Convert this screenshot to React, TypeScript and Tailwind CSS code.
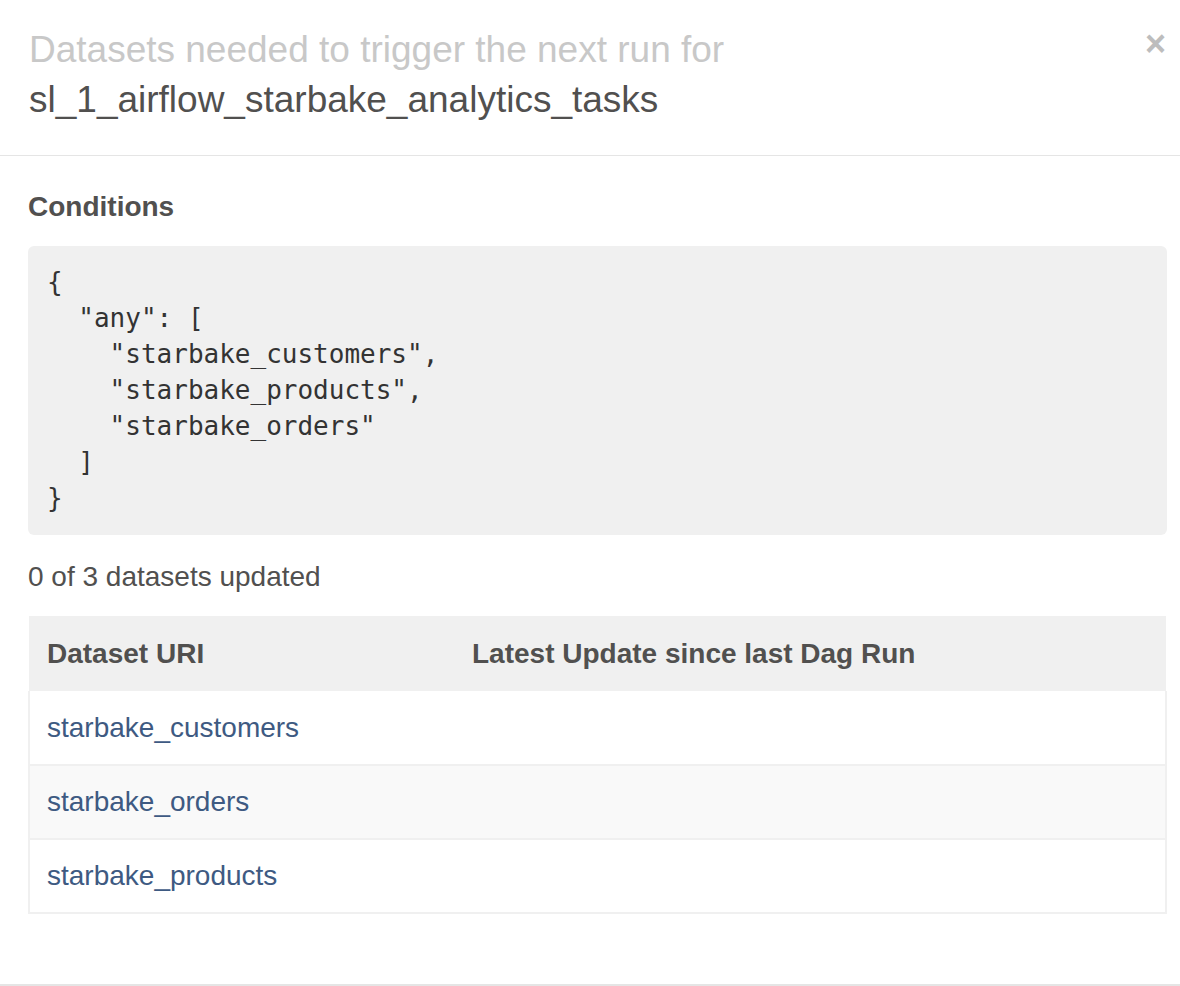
import React from "react";

const code = `{
  "any": [
    "starbake_customers",
    "starbake_products",
    "starbake_orders"
  ]
}`;

const rows = ["starbake_customers", "starbake_orders", "starbake_products"];

export default function App() {
  return (
    <div
      className="w-[1180px] h-[986px] bg-white text-[#51504f] overflow-hidden flex flex-col"
      style={{ fontFamily: '"Liberation Sans", Arial, sans-serif' }}
    >
      <div className="relative px-[29px] pt-[25px] pb-[30px] border-b border-[#e5e5e5]">
        <button className="absolute right-[14px] top-[26px] text-[36px] font-bold leading-none text-[#bdbdbd]">
          ×
        </button>
        <h4 className="text-[37px] leading-[50px] m-0">
          <span className="text-[#c8c8c8]">Datasets needed to trigger the next run for</span>
          <br />
          <span>sl_1_airflow_starbake_analytics_tasks</span>
        </h4>
      </div>
      <div className="pl-[28px] pr-[13px] pt-[34px] flex-1">
        <div className="text-[28px] font-bold leading-[34px]">Conditions</div>
        <pre
          className="mt-[22px] bg-[#f0f0f0] rounded-[6px] px-[19px] pt-[18px] pb-[19px] text-[26px] leading-[36px] text-[#333]"
          style={{ fontFamily: '"DejaVu Sans Mono", monospace' }}
        >
          {code}
        </pre>
        <div className="mt-[25px] text-[28px] leading-[34px]">0 of 3 datasets updated</div>
        <table className="mt-[22px] w-full border-collapse">
          <thead>
            <tr className="bg-[#f0f0f0]">
              <th className="text-left font-bold text-[28px] leading-[34px] h-[75px] px-[18px] w-[443px]">Dataset URI</th>
              <th className="text-left font-bold text-[28px] leading-[34px] h-[75px] px-[0px]">Latest Update since last Dag Run</th>
            </tr>
          </thead>
          <tbody>
            {rows.map((r, i) => (
              <tr key={r} className={i % 2 === 1 ? "bg-[#f9f9f9]" : "bg-white"}>
                <td className="h-[74px] px-[17px] text-[28px] leading-[34px] border-l-2 border-b-2 border-[#f0f0f0]">
                  <a className="text-[#3e5a82]">{r}</a>
                </td>
                <td className="h-[74px] border-r-2 border-b-2 border-[#f0f0f0]"></td>
              </tr>
            ))}
          </tbody>
        </table>
      </div>
      <div className="h-[2px] bg-[#e5e5e5]" />
    </div>
  );
}
